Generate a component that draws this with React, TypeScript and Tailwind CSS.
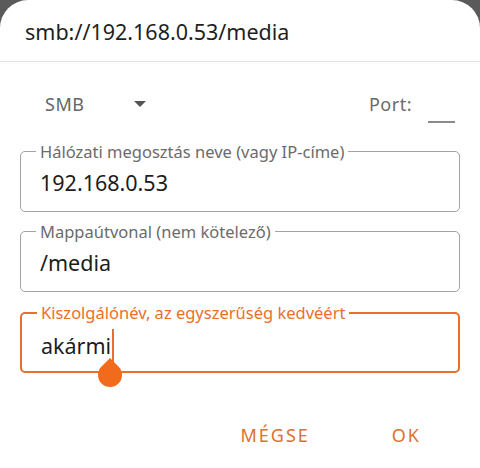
import React from "react";

function Field({
  label,
  value,
  active,
  className,
}: {
  label: string;
  value: string;
  active?: boolean;
  className?: string;
}) {
  return (
    <div
      className={
        "relative mx-5 h-[61px] w-[440px] rounded-[5px] " +
        (active ? "border-2 border-[#e8702a]" : "border border-[#a3a3a3]") +
        " " +
        (className ?? "")
      }
    >
      <span
        className={
          "absolute left-[15px] bg-white px-[4px] text-[16.5px] leading-[20px] " +
          (active ? "-top-[11px] text-[#e8702a]" : "-top-[10px] text-[#6b6b6b]")
        }
      >
        {label}
      </span>
      <div
        className={
          "flex items-center pl-[19px] text-[21.5px] leading-[28px] text-[#1c1c1c] " +
          (active ? "pt-[16px] pl-[18px]" : "pt-[17px]")
        }
      >
        {value}
        {active && <span className="ml-px h-[33px] w-[2px] bg-[#e8702a] self-start -mt-[1px]" />}
      </div>
    </div>
  );
}

export default function App() {
  return (
    <div className="h-[468px] w-[480px] bg-[#5a5a5a] font-['Noto_Sans',sans-serif]">
      <div className="relative h-full w-full rounded-t-[28px] bg-white">
        <div className="flex h-[61px] items-center pl-[25px] pt-1 text-[21.5px] text-[#1f1f1f]">
          smb://192.168.0.53/media
        </div>
        <div className="h-px bg-[#e4e4e4]" />

        <div className="mt-[14px] flex h-[56px] items-center">
          <span className="ml-[45px] text-[18px] tracking-[0.5px] text-[#666]">SMB</span>
          <svg width="12" height="6" viewBox="0 0 12 6" className="ml-[50px]">
            <path d="M0 0 L12 0 L6 6 Z" fill="#555" />
          </svg>
          <span className="ml-auto text-[18px] tracking-[0.5px] text-[#6b6b6b]">Port:</span>
          <span className="ml-[16px] mr-[25px] mt-[36px] h-[2px] w-[27px] bg-[#8a8a8a]" />
        </div>

        <Field
          className="mt-[19px]"
          label="Hálózati megosztás neve (vagy IP-címe)"
          value="192.168.0.53"
        />
        <Field className="mt-[19px]" label="Mappaútvonal (nem kötelező)" value="/media" />
        <Field
          className="mt-[20px]"
          label="Kiszolgálónév, az egyszerűség kedvéért"
          value="akármi"
          active
        />

        <svg
          width="24"
          height="29"
          viewBox="0 0 24 29"
          className="absolute left-[98px] top-[358px]"
        >
          <path d="M12 0 L20.49 8.51 A12 12 0 1 1 3.51 8.51 Z" fill="#f26b1d" />
        </svg>

        <div className="mt-[42px] flex h-[40px] items-center justify-end gap-[82px] pr-[59px] text-[18px] tracking-[2px] text-[#e0702e]">
          <span>MÉGSE</span>
          <span>OK</span>
        </div>
      </div>
    </div>
  );
}
